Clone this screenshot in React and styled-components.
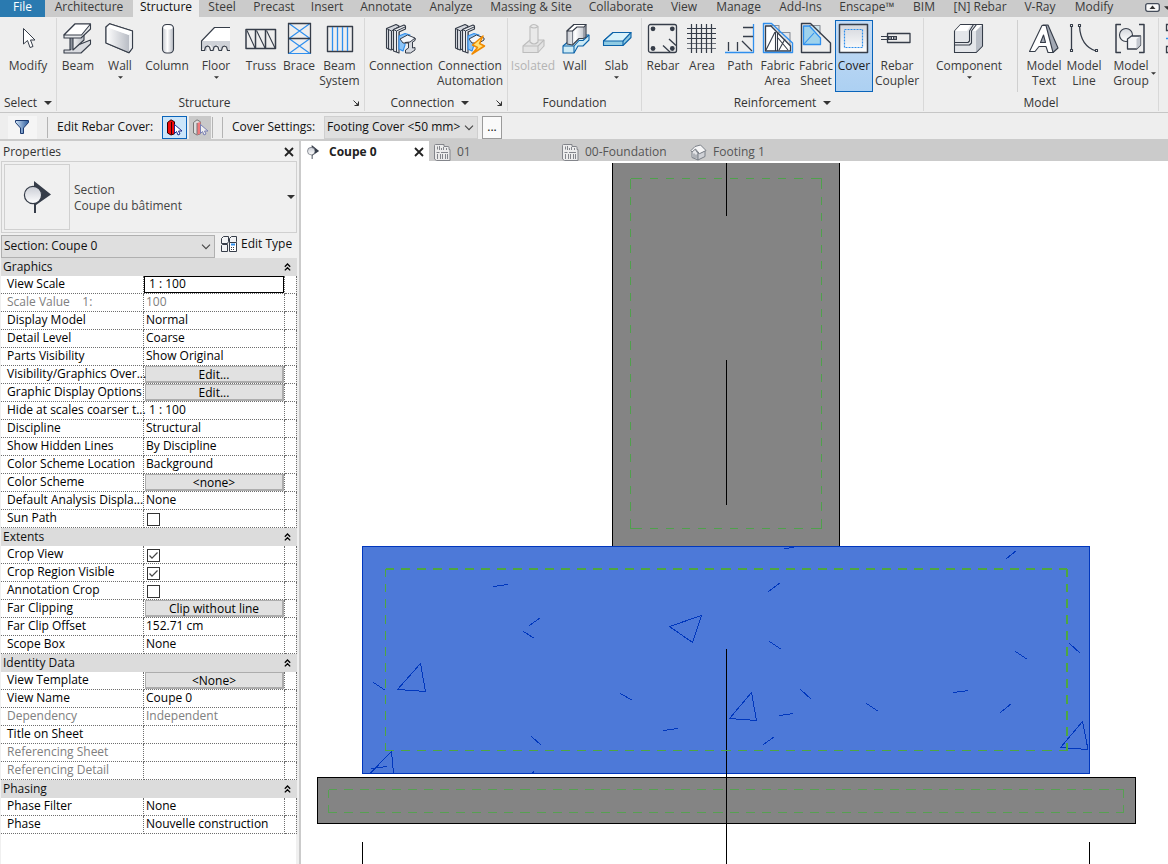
import React from "react";
import styled, { createGlobalStyle, css } from "styled-components";

const GlobalStyle = createGlobalStyle`
  * { box-sizing: border-box; }
  body { margin: 0; background: #fff; }
  body, button, input, select {
    font-family: "Open Sans", "Segoe UI", sans-serif;
    font-size: 12px;
    line-height: 16px;
    color: #333;
  }
  button, input, select { border: 0; margin: 0; padding: 0; background: none; border-radius: 0; }
`;

/* ---------- shell ---------- */
const Page = styled.div`
  display: flex;
  flex-direction: column;
  min-height: 100vh;
  background: #fff;
  overflow: hidden;
`;
const TabBar = styled.nav`
  display: flex;
  height: 17px;
  background: #cbcbcb;
`;
const MenuTab = styled.button`
  flex: none;
  width: ${(p) => p.$w}px;
  height: 17px;
  line-height: 14px;
  padding-bottom: 3px;
  white-space: nowrap;
  color: #3a3a3a;
  ${(p) => p.$file && css`background: #2a7ab0; color: #fff;`}
  ${(p) => p.$active && css`background: #eee; color: #111;`}
`;
const CollapseButton = styled.button`
  flex: none;
  display: flex;
  align-items: center;
  gap: 4px;
  margin-left: 22px;
  height: 15px;
`;
const Ribbon = styled.div`
  display: flex;
  height: 96px;
  background: #eee;
  border-bottom: 1px solid #c6c6c6;
  overflow: hidden;
`;
const Panel = styled.section`
  flex: none;
  display: flex;
  flex-direction: column;
  width: ${(p) => p.$w}px;
  margin: 1px 0;
  border-right: 1px solid #d8d8d8;
`;
const PanelButtons = styled.div`
  display: flex;
  height: 77px;
  padding: 2px 0 3px ${(p) => p.$pad || 0}px;
`;
const PanelTitle = styled.div`
  display: flex;
  align-items: center;
  justify-content: center;
  height: 16px;
  position: relative;
  gap: 7px;
  padding-right: ${(p) => p.$shift || 0}px;
`;
const Launcher = styled.button`
  position: absolute;
  right: 5px;
  top: 5px;
  display: flex;
`;
const Tool = styled.button`
  flex: none;
  width: ${(p) => p.$w}px;
  height: 72px;
  display: flex;
  flex-direction: column;
  align-items: center;
  padding-top: 3px;
  position: relative;
  line-height: 15px;
  white-space: nowrap;
  color: ${(p) => (p.disabled ? "#b4b4b4" : "#3a3a3a")};
  ${(p) =>
    p.$active &&
    css`
      background: linear-gradient(#c4dbf4, #acd0f2);
      outline: 1px solid #0a64ba;
      outline-offset: -1px;
      color: #222;
    `}
  svg { flex: none; overflow: visible; }
`;
const ToolLabel = styled.span`
  display: flex;
  flex-direction: column;
  align-items: center;
  margin-top: 3px;
`;
const ToolArrow = styled.span`
  display: flex;
  margin-top: 3px;
`;
const SideArrow = styled.span`
  position: absolute;
  right: 2px;
  bottom: 17px;
  display: flex;
`;
const ToolDivider = styled.div`
  flex: none;
  width: 1px;
  margin: 0 6px 0 3px;
  background: #cfcfcf;
`;
const ClippedIcons = styled.div`
  flex: none;
  padding: 6px 0 0 6px;
`;

/* ---------- options bar ---------- */
const OptionsBar = styled.div`
  display: flex;
  align-items: center;
  height: 28px;
  padding-top: 2px;
  background: #eee;
  border-bottom: 2px solid #cbcbcb;
  color: #111;
  white-space: nowrap;
`;
const OptionSeparator = styled.span`
  flex: none;
  width: 1px;
  height: 21px;
  background: #b4b4b4;
  margin-left: ${(p) => p.$gap || 1}px;
`;
const OptionLabel = styled.label`
  flex: none;
  width: ${(p) => p.$w}px;
  margin-left: 9px;
`;
const OptionButton = styled.button`
  flex: none;
  display: flex;
  align-items: center;
  justify-content: center;
  width: ${(p) => p.$w}px;
  height: 23px;
  margin-left: ${(p) => p.$gap || 0}px;
  background: ${(p) => p.$bg || "#f5f5f5"};
  border: ${(p) => (p.$border ? `1px solid ${p.$border}` : 0)};
  color: #111;
`;
const SelectBox = styled.div`
  position: relative;
  flex: none;
  width: ${(p) => p.$w}px;
  height: 23px;
  select {
    appearance: none;
    width: 100%;
    height: 100%;
    padding: 0 12px 0 2px;
    background: #dfdfdf;
    border: 1px solid ${(p) => p.$border || "#cfcfcf"};
    color: #111;
  }
  svg {
    position: absolute;
    right: 4px;
    top: 9px;
    pointer-events: none;
  }
`;

/* ---------- properties palette ---------- */
const Main = styled.main`
  display: flex;
  flex: 1;
`;
const Palette = styled.aside`
  flex: none;
  display: flex;
  flex-direction: column;
  width: 301px;
  padding: 0 2px 0 1px;
  background: #f0f0f0;
  border-right: 2px solid #cbcbcb;
`;
const PaletteTitle = styled.header`
  display: flex;
  align-items: center;
  justify-content: space-between;
  height: 20px;
  padding: 2px 2px 0 2px;
  button { display: flex; }
`;
const TypeSelector = styled.button`
  display: flex;
  align-items: center;
  width: 100%;
  height: 72px;
  padding: 0 1px 0 2px;
  border: 1px solid #d0d0d0;
  text-align: left;
`;
const TypePreview = styled.span`
  display: flex;
  align-items: center;
  justify-content: center;
  width: 66px;
  height: 66px;
  border: 1px solid #d0d0d0;
`;
const TypeName = styled.span`
  flex: 1;
  display: flex;
  flex-direction: column;
  padding: 2px 0 0 4px;
  color: #444;
`;
const InstanceRow = styled.div`
  display: flex;
  align-items: center;
  height: 25px;
  padding-top: 1px;
`;
const EditType = styled.button`
  display: flex;
  align-items: center;
  gap: 4px;
  margin-left: 6px;
  height: 21px;
  padding-bottom: 5px;
  white-space: nowrap;
  color: #111;
`;
const GridArea = styled.div`
  flex: 1;
  background: #fff;
  margin-right: 1px;
`;
const PropertyTable = styled.table`
  width: 100%;
  table-layout: fixed;
  border-collapse: separate;
  border-spacing: 0;
  th, td { padding: 0; font-weight: 400; text-align: left; vertical-align: top; }
`;
const GroupCell = styled.th`
  height: 18px;
  background: #dcdcdc;
  color: #111;
  button {
    display: flex;
    justify-content: space-between;
    align-items: center;
    width: 100%;
    height: 18px;
    line-height: 18px;
    padding: 0 6px 0 2px;
    color: #111;
  }
`;
const cell = css`
  height: 18px;
  line-height: 15px;
  border-bottom: 1px dotted #6e6e6e;
  border-right: 1px dotted #6e6e6e;
  white-space: pre;
  color: ${(p) => (p.$muted ? "#808080" : "#000")};
`;
const NameCell = styled.th`
  ${cell}
  && { padding-left: 6px; }
`;
const ValueCell = styled.td`
  ${cell}
  && { padding-left: ${(p) => (p.$flush ? 0 : 2)}px; }
`;
const EndCell = styled.td`
  ${cell}
`;
const ValueInput = styled.input`
  display: block;
  width: 100%;
  height: ${(p) => (p.$focused ? 17 : 15)}px;
  line-height: 15px;
  color: #000;
  padding: 0 0 ${(p) => (p.$focused ? 2 : 0)}px ${(p) => p.$pad || 0}px;
  border: ${(p) => (p.$focused ? "1px solid #000" : 0)};
`;
const ValueButton = styled.button`
  display: block;
  width: calc(100% - 1px);
  height: 17px;
  margin-left: 1px;
  padding-top: 1px;
  line-height: 14px;
  background: #e1e1e1;
  border: 1px solid #adadad;
  border-right-width: 2px;
  border-bottom-width: 2px;
  color: #000;
`;
const Check = styled.input`
  appearance: none;
  display: block;
  width: 13px;
  height: 13px;
  margin: 3px 0 0 1px;
  border: 1px solid #333;
  background: #fff;
  &:checked {
    background: url("data:image/svg+xml,%3Csvg xmlns='http://www.w3.org/2000/svg' viewBox='0 0 11 11'%3E%3Cpath d='M1.5 5.5 4 8.2 9.5 2.5' fill='none' stroke='%23444' stroke-width='1.2'/%3E%3C/svg%3E");
  }
`;

/* ---------- drawing area ---------- */
const Workspace = styled.div`
  flex: 1;
  min-width: 0;
  display: flex;
  flex-direction: column;
`;
const ViewTabs = styled.div`
  display: flex;
  height: 20px;
  background: #cbcbcb;
`;
const ViewTab = styled.div`
  flex: none;
  display: flex;
  align-items: center;
  width: 128px;
  padding: 2px 4px 0 5px;
  background: ${(p) => (p.$active ? "#fff" : "none")};
  button { display: flex; align-items: center; line-height: 18px; color: ${(p) => (p.$active ? "#222" : "#555")}; }
  button:first-child {
    flex: 1;
    gap: ${(p) => (p.$active ? 9 : 6)}px;
    font-weight: ${(p) => (p.$active ? 700 : 400)};
  }
`;
const Drawing = styled.svg`
  display: block;
  width: 100%;
`;

/* ---------- small glyphs ---------- */
const Caret = ({ w = 8, h = 4 }) => (
  <svg width={w} height={h} viewBox="0 0 8 4"><path d="M0 0h8L4 4z" fill="#333" /></svg>
);
const Chevron = () => (
  <svg width="10" height="6" viewBox="0 0 10 6"><path d="M1 .7 5 4.7 9 .7" fill="none" stroke="#444" strokeWidth="1.1" /></svg>
);
const Close = () => (
  <svg width="12" height="12" viewBox="0 0 12 12"><path d="M2 2l8 8M10 2l-8 8" stroke="#222" strokeWidth="1.8" /></svg>
);
const LaunchGlyph = () => (
  <svg width="6" height="6" viewBox="0 0 6 6"><path d="M.5.5 4 4M5.500 1.500v4h-4" fill="none" stroke="#333" /><path d="M5.500 2.500v3h-3z" fill="#333" /></svg>
);
const DoubleUp = () => (
  <svg width="7" height="8" viewBox="0 0 7 8"><path d="M.8 3.7 3.5 1l2.7 2.7M.8 7.4l2.7-2.7 2.7 2.7" fill="none" stroke="#000" strokeWidth="1.3" /></svg>
);
const SectionGlyph = ({ size }) => (
  <svg width={size} height={size} viewBox="0 0 32 32">
    <defs><linearGradient id="ball" x2="0" y2="1"><stop offset="0" stopColor="#c9ccd4" /><stop offset="1" stopColor="#fff" /></linearGradient></defs>
    <path d="M13 0 30 13.5 15 24v8h-2z" fill="#363d49" />
    <circle cx="12" cy="14" r="8.600" fill="url(#ball)" stroke="#363d49" strokeWidth="1.200" />
  </svg>
);
const SheetGlyph = () => (
  <svg width="17" height="17" viewBox="0 0 17 17" fill="none" stroke="#83858b">
    <path d="M.5 1.500q0-1 1-1h8.500v2h4q1 0 1 1v2h1v11h-13.500l-2-1.500z" fill="#ececec" />
    <path d="M3.500 2.500v3M5.500 2v4M7.500 4v2M9.500 3v3M12.500 4v2M2.500 8.500h3M7 8.500h7M3.500 10v5M6.500 10v5M8.500 10v5M11.500 10v5M13.500 10v5" />
  </svg>
);
const HouseGlyph = () => (
  <svg width="17" height="17" viewBox="0 0 17 17" stroke="#7b8088" strokeLinejoin="round">
    <path d="M2 7v6.500l6 2.500V9.500L5 5z" fill="#e4e5e8" />
    <path d="M8 16l7-3.500V7L8 9.500z" fill="#cfd1d6" />
    <path d="M1 6.500 5 2.500 10.500 1l5.500 5.500-6.500 3.200L5.500 5 2 8z" fill="#f5f5f6" />
    <path d="M4 9.500v4.500M6 10.500v4" />
  </svg>
);

/* ---------- ribbon icons, each on a 32 unit square ---------- */
const D = "#363d49";
const B = "#2f8fee";
const Icon = ({ children }) => (
  <svg width="32" height="32" viewBox="0 0 32 32" fill="none" stroke={D} strokeWidth="1.1" strokeLinejoin="round">
    <defs>
      <linearGradient id="metal"><stop offset="0" stopColor="#fff" /><stop offset="1" stopColor="#b9bdc5" /></linearGradient>
      <linearGradient id="fade" x2="0" y2="1"><stop offset="0" stopColor="#d3d6dc" /><stop offset="1" stopColor="#fff" /></linearGradient>
      <linearGradient id="tube"><stop offset="0" stopColor="#c4c7ce" /><stop offset=".45" stopColor="#fff" /><stop offset="1" stopColor="#b3b7c0" /></linearGradient>
    </defs>
    {children}
  </svg>
);
const plates = (
  <>
    <path d="M1.500 5.500 11 1.500l3 1.500v21l-8 3-4.500-2z" fill="#d4d7dd" />
    <path d="M3.500 6.500v20M6.500 8v19M1.500 5.500l5 2.500 7.500-4.500" strokeWidth="1" />
    <path d="M8.500 6.500 19 2l1.500 1v3L14 9v21l-5.500-2z" fill="#e9ebef" />
    <path d="M8.500 6.500 11.500 8v21M11.500 8l8.500-4" strokeWidth="1" />
    <path d="M14 13l6-2.500 5 1.500-5 4v6l-2 6-4-2z" fill="#8cc4f7" stroke={B} />
    <path d="M15 16l7.500-4 7.500 3v2l-5 3h-7z" fill="#f4f6fa" strokeWidth="1" />
  </>
);
const icons = {
  modify: (
    <path d="M11.500 5.500v15.500l4-3.500 2.500 7 3-1-2.500-6.500h4.500z" fill="#fff" strokeWidth="1" />
  ),
  beam: (
    <>
      <path d="M2 27h6l3-3 17.500-7v4L19 30H2z" fill="#d9dbe0" />
      <path d="M8 15v11l3 1 11-9.500V11H8z" fill="#8b919c" stroke="none" />
      <path d="M8 14.500V27M11 15v12l11-10v-5" fill="url(#metal)" />
      <path d="M2 12 13 1h15.500v5L19 15H2z" fill="#e6e8eb" />
      <path d="M2 12 13 1h15.500L19.500 12z" fill="#fff" />
    </>
  ),
  wall: (
    <>
      <path d="M2 4 5.500.8 28.500 8v17L25 29.700 2 20z" fill="url(#fade)" />
      <path d="M2 4l23 8v17.700L28.500 25V8z" fill="#eceef1" stroke="none" />
      <path d="M2 4 25 12v17.700L2 20z" fill="url(#metal)" stroke="none" />
      <path d="M2 4 5.500.8 28.500 8 25 12z" fill="#fff" stroke="none" />
      <path d="M2 4 5.500.8 28.500 8v17L25 29.700 2 20z" />
    </>
  ),
  column: (
    <>
      <rect x="11.500" y="1.500" width="11" height="28.500" rx="4" fill="url(#tube)" />
      <ellipse cx="17" cy="4.500" rx="4.500" ry="2" fill="#fff" stroke="none" />
    </>
  ),
  floor: (
    <>
      <path d="M1.500 18 14.500 4.500H30v23h-2.500v-2.500l-2-3h-1l-2.500 3V28h-2v-3l-2-3h-1l-2.500 3v3h-2v-3l-2-3h-1l-2.500 3v3H4v-3.500L1.500 27z" fill="#cfd2d8" stroke="none" />
      <path d="M1.500 18 14.500 4.500H30V18z" fill="#fff" stroke="none" />
      <path d="M30 4.500H14.500L1.500 18v9.500h3l1-3.500 2-1 2 1 1 3.500h2.500l1-3.500 2-1 2 1 1 3.500h2.500l1-3.500 2-1 2 1 1 3.500H30" />
    </>
  ),
  truss: (
    <>
      <path d="M1 6.500h29.500v19H1z" strokeWidth="1.500" />
      <path d="M10.500 7v18M20.500 7v18" strokeWidth="1.500" />
      <path d="M2 7.500 10 25M11.500 7.500 20 25M21.500 7.500 30 25" />
    </>
  ),
  brace: (
    <>
      <path d="M6 .5l21 15M27 .5l-21 15M6 15.500l21 15M27 15.500l-21 15M5 30.500h23" stroke={B} strokeWidth="1.200" />
      <path d="M5.500 0v30.500M27.500 0v30.500M5 .5h23M5 15.500h23" strokeWidth="1.300" />
    </>
  ),
  system: (
    <>
      <path d="M3.500 3.500h25v25h-25z" strokeWidth="1.400" />
      <path d="M8.500 4v24M13.500 4v24M18.500 4v24M23.500 4v24" stroke={B} strokeWidth="1.300" />
    </>
  ),
  connection: (
    <>
      {plates}
      <path d="M20 19.500h3.500v5.500l-3 2v3h5l4.500-3v-2.500l-2.500.5v-6l2.500-1.500V15l-5 4z" fill="#d6d9df" strokeWidth="1" />
    </>
  ),
  automation: (
    <>
      {plates}
      <path d="M29 13 18.500 22l5 2.500L18 31l12.500-8-5-2.500z" fill="#ffe27a" stroke="#f08a00" strokeWidth="1.500" />
    </>
  ),
  isolated: (
    <g stroke="#bdbdbd">
      <path d="M6 23 13 17h14v6l-6 6.500H6z" fill="#e3e3e3" />
      <path d="M6 23h15v6.500M21 23l6-6" />
      <path d="M13 3.500q3.500-4 8 0V19q-4 4-8 0z" fill="#e9e9e9" />
      <path d="M13 3.500q4 3 8 0" />
    </g>
  ),
  wallFoundation: (
    <>
      <path d="M4 23l6-5h3l6-6h11v5l-6 6h-5l-4 7H4z" fill="#cdeaf5" stroke="#0b62a8" />
      <path d="M4 23h11l5-5.500h4L30 12M15 23v7" stroke="#0b62a8" />
      <path d="M8 21V8l7-6.500h12V14l-3 1.500h-4L13.500 22z" fill="url(#tube)" />
      <path d="M13.500 8v13M25 4v11" stroke="#7a808b" />
      <path d="M8 8l7-6.500h12L25 4h-7l-4.500 4z" fill="#fff" />
    </>
  ),
  slab: (
    <g stroke="#0b62a8">
      <path d="M2.500 18 12 9.500h18v5L22 22.500H2.500z" fill="#8fcbe3" />
      <path d="M2.500 18 12 9.500h18L22 18z" fill="#d9f2fa" />
      <path d="M22 18v4.500" />
    </g>
  ),
  rebar: (
    <>
      <rect x="1.500" y="1.500" width="28" height="28" rx="2" strokeWidth="1.300" />
      <path d="M22 16l7 6.500M16 22.500l7 6.500" strokeWidth="1.300" />
      <g fill={D} stroke="none"><circle cx="6" cy="5.800" r="2.400" /><circle cx="25.300" cy="5.800" r="2.400" /><circle cx="6" cy="25.500" r="2.400" /><circle cx="25.300" cy="25.500" r="2.400" /></g>
    </>
  ),
  area: (
    <>
      <path d="M1 5.500h29M1 10.500h29M1 15.500h29" strokeWidth="1.200" />
      <path d="M1 20.500h29M1 25.500h29" stroke="#6d727b" strokeWidth="1.200" />
      <path d="M5.500 1v29M10.500 1v29M15.500 1v29M20.500 1v29M25.500 1v29" strokeWidth="1.200" />
    </>
  ),
  path: (
    <>
      <path d="M1 29.500h28.500V1" stroke={B} strokeWidth="1.300" />
      <path d="M4.500 19v9M13.500 19v9M18 18l10 10M19 4.500h10M19 13.500h10" strokeWidth="1.300" />
    </>
  ),
  fabricArea: (
    <>
      <path d="M8 2.500h9v7h11v14" stroke="#8b9099" fill="#e3e5e9" />
      <path d="M3.500 28V3h5.500l19.500 20v5z" fill="#fff" strokeWidth="1.300" />
      <path d="M13.500 9v19M15.500 10v18M4 27 13 9M17 27l6-11M16 15l10 12" />
      <path d="M1.500 29.500V.5h8L30.500 20v9.500z" stroke={B} strokeWidth="1.400" />
    </>
  ),
  fabricSheet: (
    <>
      <path d="M9 2.500h11v9" stroke="#8b9099" fill="#cfe6ee" />
      <path d="M3.500 3h6l11 12v6.500h-17z" fill="#9ed2ec" stroke={B} strokeWidth="1.300" />
      <path d="M3.500 21.500 14 10" stroke={B} />
      <path d="M1.500 29.500V.5h9L30.500 20v9.500z" strokeWidth="1.400" />
    </>
  ),
  cover: (
    <>
      <rect x="1.500" y="1.500" width="28" height="28" fill="url(#fade)" strokeWidth="1.500" />
      <rect x="6.500" y="6.500" width="18" height="18" stroke={B} strokeDasharray="2 1" strokeWidth="1.200" />
    </>
  ),
  coupler: (
    <>
      <rect x="6.500" y="10.500" width="22.500" height="9" strokeWidth="1.300" />
      <path d="M0 13.500h16M0 16.500h16" />
      <path d="M7 15h9" strokeWidth="4" strokeDasharray="1.500 1" />
    </>
  ),
  component: (
    <>
      <path d="M1.500 8 7.500 1.500h22v21.500L23 29.500H1.500z" fill="#e4e6ea" />
      <path d="M2 8 7.500 2h10L14 8z" fill="#fff" stroke="none" />
      <path d="M19 8 24 2h5L23 8z" fill="#fff" stroke="none" />
      <path d="M23 8l6-6v21l-6 6z" fill="#b8bdc6" stroke="none" />
      <path d="M1.500 19.500h13.500l1.500-1.500V8l4-6.500M1.500 22h15l2-2V8l5-6.500" />
    </>
  ),
  modelText: (
    <>
      <path d="M15 2l5 0 10 23-5 4.500-5-3.500z" fill="#a3a9b4" />
      <path d="M1.500 28.500 14 2.500h4l7 27h-5l-2-6h-7l-4 5z" fill="#fff" />
      <path d="M12.500 19.500 15.500 12l2 7.500z" fill="#a3a9b4" />
    </>
  ),
  modelLine: (
    <>
      <path d="M3.500 3v24M11.500 3q1 20 16.500 25" strokeWidth="1.300" />
      <g fill="#fff"><rect x="2.500" y="1.500" width="2" height="2" /><rect x="2.500" y="26.500" width="2" height="2" /><rect x="10.500" y="1.500" width="2" height="2" /><rect x="27.500" y="26.500" width="2" height="2" /></g>
    </>
  ),
  group: (
    <>
      <path d="M6 1.500H1v28h5M24 1.500h5v28h-5" strokeWidth="1.500" />
      <circle cx="11" cy="12" r="6.500" fill="url(#fade)" />
      <path d="M12.500 16l4-3h9v9l-4 4h-9z" fill="#f4f5f7" strokeWidth="1.300" />
      <path d="M21.500 16v10l4-4v-9z" fill="#c3c7cf" stroke="none" />
    </>
  ),
};

/* ---------- data ---------- */
const menuTabs = [
  ["File", 45], ["Architecture", 88], ["Structure", 66], ["Steel", 46], ["Precast", 58], ["Insert", 48],
  ["Annotate", 70], ["Analyze", 60], ["Massing & Site", 100], ["Collaborate", 80], ["View", 46],
  ["Manage", 63], ["Add-Ins", 61], ["Enscape™", 72], ["BIM", 42], ["[N] Rebar", 70], ["V-Ray", 50], ["Modify", 58],
];
const panels = [
  { title: "Select", w: 57, menu: true, tools: [["modify", 56, ["Modify"]]] },
  {
    title: "Structure", w: 308, launcher: true, shift: 12,
    tools: [
      ["beam", 42, ["Beam"]], ["wall", 42, ["Wall"], "down"], ["column", 52, ["Column"]], ["floor", 46, ["Floor"], "down"],
      ["truss", 44, ["Truss"]], ["brace", 32, ["Brace"]], ["system", 49, ["Beam", "System"]],
    ],
  },
  { title: "Connection", w: 143, menu: true, launcher: true, shift: 12, tools: [["connection", 72, ["Connection"]], ["automation", 66, ["Connection", "Automation"]]] },
  { title: "Foundation", w: 134, pad: 2, tools: [["isolated", 46, ["Isolated"], "off"], ["wallFoundation", 38, ["Wall"]], ["slab", 45, ["Slab"], "down"]] },
  {
    title: "Reinforcement", w: 282, pad: 2, menu: true,
    tools: [
      ["rebar", 38, ["Rebar"]], ["area", 40, ["Area"]], ["path", 36, ["Path"]], ["fabricArea", 39, ["Fabric", "Area"]],
      ["fabricSheet", 38, ["Fabric", "Sheet"]], ["cover", 38, ["Cover"], "active"], ["coupler", 48, ["Rebar", "Coupler"]],
    ],
  },
  {
    title: "Model", w: 235,
    tools: [["component", 90, ["Component"], "down"], "divider", ["modelText", 40, ["Model", "Text"]], ["modelLine", 40, ["Model", "Line"]], ["group", 54, ["Model", "Group"], "side"]],
  },
];
const groups = [
  ["Graphics", [
    ["View Scale", "focus", "1 : 100"], ["Scale Value    1:", "muted", "100"], ["Display Model", "text", "Normal"],
    ["Detail Level", "text", "Coarse"], ["Parts Visibility", "text", "Show Original"],
    ["Visibility/Graphics Over...", "button", "Edit..."], ["Graphic Display Options", "button", "Edit..."],
    ["Hide at scales coarser t...", "scale", "1 : 100"], ["Discipline", "text", "Structural"],
    ["Show Hidden Lines", "text", "By Discipline"], ["Color Scheme Location", "text", "Background"],
    ["Color Scheme", "button", "<none>"], ["Default Analysis Displa...", "text", "None"], ["Sun Path", "check", false],
  ]],
  ["Extents", [
    ["Crop View", "check", true], ["Crop Region Visible", "check", true], ["Annotation Crop", "check", false],
    ["Far Clipping", "button", "Clip without line"], ["Far Clip Offset", "input", "152.71 cm"], ["Scope Box", "text", "None"],
  ]],
  ["Identity Data", [
    ["View Template", "button", "<None>"], ["View Name", "input", "Coupe 0"], ["Dependency", "muted", "Independent"],
    ["Title on Sheet", "input", ""], ["Referencing Sheet", "muted", ""], ["Referencing Detail", "muted", ""],
  ]],
  ["Phasing", [["Phase Filter", "text", "None"], ["Phase", "text", "Nouvelle construction"]]],
];

function Value({ kind, value, label }) {
  if (kind === "button") return <ValueButton aria-label={`${label}: ${value}`}>{value}</ValueButton>;
  if (kind === "check") return <Check type="checkbox" defaultChecked={value} aria-label={label} />;
  if (kind === "focus") return <ValueInput $focused $pad={4} defaultValue={value} aria-label={label} />;
  if (kind === "scale") return <ValueInput $pad={3} defaultValue={value} aria-label={label} />;
  if (kind === "input") return <ValueInput defaultValue={value} aria-label={label} />;
  return value;
}

function RibbonTool({ tool }) {
  const [icon, w, lines, mode] = tool;
  return (
    <Tool $w={w} $active={mode === "active"} disabled={mode === "off"}>
      <Icon>{icons[icon]}</Icon>
      <ToolLabel>{lines.map((l) => <span key={l}>{l}</span>)}</ToolLabel>
      {mode === "down" && <ToolArrow><Caret w={5} h={3} /></ToolArrow>}
      {mode === "side" && <SideArrow><Caret w={5} h={3} /></SideArrow>}
    </Tool>
  );
}

/* Dashed outline with solid corners: whole dashes are spread evenly between the end pieces. */
function dashes(length, end, gap) {
  const inner = length - 2 * end - gap;
  const n = Math.max(0, Math.round(inner / 16));
  const list = [end, gap];
  for (let i = 0; i < n; i++) list.push(inner / n - gap, gap);
  list.push(end);
  return [...list, 1].join(" ");
}
function CoverOutline({ x, y, w, h, ex, ey, gap = 8, color, thick = 1 }) {
  const hor = { strokeDasharray: dashes(w, ex, gap), strokeWidth: thick };
  const ver = { strokeDasharray: dashes(h, ey, gap), strokeWidth: 1 };
  return (
    <g stroke={color}>
      <path d={`M${x} ${y}h${w}`} {...hor} />
      <path d={`M${x} ${y + h}h${w}`} {...hor} strokeWidth="1" />
      <path d={`M${x} ${y}v${h}`} {...ver} />
      <path d={`M${x + w} ${y}v${h}`} {...ver} strokeWidth={thick} />
    </g>
  );
}
const aggregate =
  "M493 586.500 508 584.500M529.500 625.500l11-8M523.500 631.500l11 7M373.500 682.500l12 8M620.500 693.500l12 7M663 730.500l15-2" +
  "M531.500 736.500l10 9M532.500 772.500l2-1M370.500 773 391.500 751.500 393.500 773M371 768.500l16-2M784.500 548.500l10-1" +
  "M1006.500 558.500l10-8M768.500 591.500l12-9M769.500 641.500l12 8M1015.500 651.500l12 8M1069.500 643.500l11 10M800.500 689.500l11 10" +
  "M779.500 715.500l14-2M763.500 744.500l11-8M866.500 703.500l12 8M953.500 692.500l15-2M1000.500 712.500l11-9" +
  "M669.500 626.500 701.500 615.500 692.500 642.500zM420.500 663.500 397.500 689.500 425.500 691.500zM751.500 692.500 729.500 718.500 756.500 720.500z" +
  "M1082.500 721.500 1060.500 747.500 1088 749.500z";

export default function App() {
  return (
    <Page>
      <GlobalStyle />
      <TabBar aria-label="Ribbon tabs">
        {menuTabs.map(([name, w]) => (
          <MenuTab key={name} $w={w} $file={name === "File"} $active={name === "Structure"}>{name}</MenuTab>
        ))}
        <CollapseButton aria-label="Minimize ribbon">
          <svg width="15" height="9" viewBox="0 0 15 9"><rect x=".7" y=".7" width="13.600" height="7.600" rx="2" fill="#fafafa" stroke="#444c5a" strokeWidth="1.300" /><path d="M4.500 6h6l-3-3.500z" fill="#333" /></svg>
          <Caret w={7} h={4} />
        </CollapseButton>
      </TabBar>
      <Ribbon>
        {panels.map((p) => (
          <Panel key={p.title} $w={p.w}>
            <PanelButtons $pad={p.pad}>
              {p.tools.map((t, i) => (t === "divider" ? <ToolDivider key={i} /> : <RibbonTool key={i} tool={t} />))}
            </PanelButtons>
            <PanelTitle $shift={p.shift}>
              {p.title}
              {p.menu && <Caret />}
              {p.launcher && <Launcher aria-label={`${p.title} settings`}><LaunchGlyph /></Launcher>}
            </PanelTitle>
          </Panel>
        ))}
        <ClippedIcons>
          <svg width="16" height="32" viewBox="0 0 16 32" fill="none" stroke={D} strokeWidth="1.300">
            <path d="M1.500 1.500h12v6h-12zM1.500 23.500h12v6h-12z" /><path d="M1 15.500h14" stroke={B} />
          </svg>
        </ClippedIcons>
      </Ribbon>

      <OptionsBar>
        <OptionButton $w={29} $gap={8} aria-label="Filter">
          <svg width="16" height="16" viewBox="0 0 16 16"><defs><linearGradient id="funnel"><stop offset="0" stopColor="#cfe3f6" /><stop offset="1" stopColor="#2c5c9e" /></linearGradient></defs><path d="M.5 1.500h13v2L8.500 9v5.500h-3V9l-5-5.500z" fill="url(#funnel)" stroke="#1c3a70" /></svg>
        </OptionButton>
        <OptionSeparator $gap={10} />
        <OptionLabel as="span" $w={96}>Edit Rebar Cover:</OptionLabel>
        <OptionButton $w={25} $gap={9} $bg="#cce6fa" $border="#0a64ba" aria-label="Pick elements">
          <svg width="17" height="17" viewBox="0 0 17 17"><path d="M1.500 3.500 5 .8l3.500 2v12L5 16l-3.500-2z" fill="#f20a0a" stroke="#300" /><path d="M5.500 3v12.500" stroke="#300" /><path d="M8.500 5.500v9l2-2 1.500 3.500 2-1-1.500-3H16z" fill="#fff" stroke="#1c2a8c" /></svg>
        </OptionButton>
        <OptionButton $w={22} $gap={2} $bg="#c9c9c9" aria-label="Pick faces">
          <svg width="17" height="17" viewBox="0 0 17 17"><path d="M1.500 3.500 5 .8l3.500 2v12L5 16l-3.500-2z" fill="#dcdcdc" stroke="#777" /><path d="M5 4l3.500-1v11.500L5 16z" fill="#f0787a" /><path d="M5 4v11.500" stroke="#777" /><path d="M8.500 5.500v9l2-2 1.500 3.500 2-1-1.500-3H16z" fill="#eee" stroke="#7a80b4" /></svg>
        </OptionButton>
        <OptionSeparator />
        <OptionSeparator $gap={9} />
        <OptionLabel htmlFor="cover" $w={92}>Cover Settings:</OptionLabel>
        <SelectBox $w={154}>
          <select id="cover"><option>Footing Cover &lt;50 mm&gt;</option></select>
          <Chevron />
        </SelectBox>
        <OptionButton $w={20} $gap={4} $border="#9a9a9a" $bg="#fafafa">...</OptionButton>
      </OptionsBar>

      <Main>
        <Palette>
          <PaletteTitle>Properties<button aria-label="Close properties"><Close /></button></PaletteTitle>
          <TypeSelector>
            <TypePreview><SectionGlyph size={32} /></TypePreview>
            <TypeName><span>Section</span><span>Coupe du bâtiment</span></TypeName>
            <Caret />
          </TypeSelector>
          <InstanceRow>
            <SelectBox $w={214} $border="#b0b0b0">
              <select aria-label="Instance"><option>Section: Coupe 0</option></select>
              <Chevron />
            </SelectBox>
            <EditType>
              <svg width="16" height="16" viewBox="0 0 16 16" fill="#f2f3f5" stroke={D}>
                <path d="M.5 2.500 2.500.5h5v5l-1 2h-6zM8.500 2.500l2-2h5v5l-1 1h-6zM.5 9.500l1-1h5v7h-6z" />
                <path d="M8.500 6.500h7v9h-7z" fill="#fff" /><path d="M10 8.500h4" stroke={B} strokeWidth="2" /><path d="M10 11.500h4M10 13.500h4" strokeDasharray="1 1" />
              </svg>
              Edit Type
            </EditType>
          </InstanceRow>
          <GridArea>
            <PropertyTable>
              <colgroup><col width="143" /><col width="141" /><col width="12" /></colgroup>
              {groups.map(([title, rows]) => (
                <tbody key={title}>
                  <tr><GroupCell colSpan={3}><button>{title}<DoubleUp /></button></GroupCell></tr>
                  {rows.map(([label, kind, value]) => (
                    <tr key={label}>
                      <NameCell scope="row" $muted={kind === "muted"}>{label}</NameCell>
                      <ValueCell $muted={kind === "muted"} $flush={kind === "button" || kind === "focus"}>
                        <Value kind={kind} value={value} label={label} />
                      </ValueCell>
                      <EndCell />
                    </tr>
                  ))}
                </tbody>
              ))}
            </PropertyTable>
          </GridArea>
        </Palette>

        <Workspace>
          <ViewTabs>
            <ViewTab $active>
              <button><SectionGlyph size={14} />Coupe 0</button>
              <button aria-label="Close view"><Close /></button>
            </ViewTab>
            <ViewTab><button><SheetGlyph />01</button></ViewTab>
            <ViewTab><button><SheetGlyph />00-Foundation</button></ViewTab>
            <ViewTab><button><HouseGlyph />Footing 1</button></ViewTab>
          </ViewTabs>
          <Drawing viewBox="301 161 867 703" fill="none" shapeRendering="crispEdges" role="img" aria-label="Section view of a footing">
            <path d="M612 163h228v384H612z" fill="#848484" />
            <path d="M612.500 163v384M839.500 163v384" stroke="#000" />
            <CoverOutline x={630.5} y={178.5} w={191} h={350} ex={11} ey={10} color="#4fa04c" />
            <rect x="317.500" y="777.500" width="818" height="46" fill="#848484" stroke="#000" />
            <CoverOutline x={328.5} y={789.5} w={795} h={23} ex={8} ey={8} gap={7} color="#56a052" />
            <rect x="362.500" y="546.500" width="727" height="227" fill="#4d79d8" stroke="#0037bd" />
            <path d={aggregate} stroke="#0037bd" />
            <path d="M726.500 163v53M726.500 360v145M726.500 649v215M362.500 842v22M1089.500 842v22" stroke="#000" />
            <CoverOutline x={385.5} y={568.5} w={681} h={182} ex={8} ey={8} gap={7} color="#4ea640" thick={2} />
          </Drawing>
        </Workspace>
      </Main>
    </Page>
  );
}
